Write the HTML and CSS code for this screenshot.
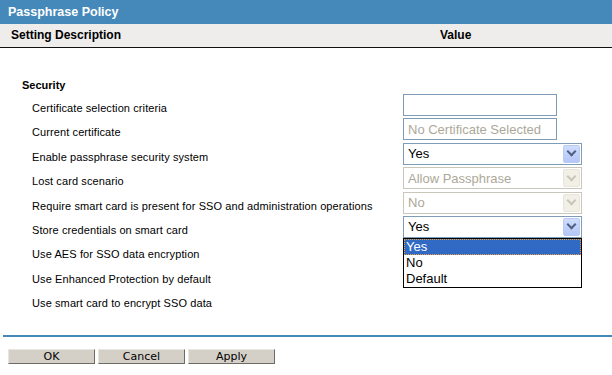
FILE: index.html
```html
<!DOCTYPE html>
<html lang="en">
<head>
    <meta charset="UTF-8">
    <meta name="viewport" content="width=device-width, initial-scale=1.0">
    <title>Passphrase Policy</title>
    <link rel="stylesheet" href="styles.css">
</head>
<body>
    <div class="title">Passphrase Policy</div>
    <div class="head">
        <span>Setting Description</span>
        <span>Value</span>
    </div>

    <div class="section">Security</div>
    <div class="rows">
        <div class="row">
            <span class="label">Certificate selection criteria</span>
            <div class="field text"></div>
        </div>
        <div class="row">
            <span class="label">Current certificate</span>
            <div class="field text"><span class="muted">No Certificate Selected</span></div>
        </div>
        <div class="row">
            <span class="label">Enable passphrase security system</span>
            <div class="field select"><span>Yes</span><i class="arrow"></i></div>
        </div>
        <div class="row">
            <span class="label">Lost card scenario</span>
            <div class="field select disabled"><span>Allow Passphrase</span><i class="arrow"></i></div>
        </div>
        <div class="row">
            <span class="label">Require smart card is present for SSO and administration operations</span>
            <div class="field select disabled"><span>No</span><i class="arrow"></i></div>
        </div>
        <div class="row">
            <span class="label">Store credentials on smart card</span>
            <div class="field select open">
                <span>Yes</span><i class="arrow"></i>
                <ul class="list">
                    <li class="active">Yes</li>
                    <li>No</li>
                    <li>Default</li>
                </ul>
            </div>
        </div>
        <div class="row">
            <span class="label">Use AES for SSO data encryption</span>
        </div>
        <div class="row">
            <span class="label">Use Enhanced Protection by default</span>
        </div>
        <div class="row">
            <span class="label">Use smart card to encrypt SSO data</span>
        </div>
    </div>

    <div class="rule"></div>
    <div class="buttons">
        <button>OK</button>
        <button>Cancel</button>
        <button>Apply</button>
    </div>
</body>
</html>
```

FILE: styles.css
```css
body {
    margin: 0;
    font-family: 'Liberation Sans', Arial, sans-serif;
    background: #fff;
    color: #000;
}

.title {
    height: 24px;
    line-height: 24px;
    padding-left: 8px;
    background: #4589ba;
    color: #fff;
    font-size: 12.5px;
    font-weight: bold;
}

.head {
    display: grid;
    grid-template-columns: 429px 1fr;
    height: 23px;
    line-height: 23px;
    padding-left: 11px;
    background: #eeedeb;
    border-bottom: 1px solid #111;
    font-size: 12px;
    font-weight: bold;
}

.section {
    margin-top: 30px;
    padding-left: 22px;
    line-height: 14px;
    font-size: 11px;
    font-weight: bold;
}

.rows {
    display: grid;
    grid-auto-rows: 24.4px;
    margin-top: 1px;
}

.row {
    display: grid;
    grid-template-columns: 403px 1fr;
}

.label {
    padding: 8px 0 0 32px;
    line-height: 14px;
    font-size: 11px;
    letter-spacing: 0.1px;
}

.field {
    position: relative;
    box-sizing: border-box;
    display: flex;
    align-items: center;
    height: 22px;
    margin-top: 1px;
    padding-left: 4px;
    border: 1px solid #7f9db9;
    font-size: 13px;
    background: #fff;
}

.text {
    width: 154px;
}

.muted {
    color: #aca899;
}

.select {
    width: 179px;
    justify-content: space-between;
    padding-right: 1px;
}

.arrow {
    box-sizing: border-box;
    width: 17px;
    height: 18px;
    border: 1px solid #b9cbf3;
    border-radius: 2px;
    background: linear-gradient(#cfdcfd, #b4c7f7);
    display: flex;
    align-items: center;
    justify-content: center;
}

.arrow::after {
    content: "";
    width: 5px;
    height: 5px;
    margin-top: -4px;
    border-right: 2px solid #4d6185;
    border-bottom: 2px solid #4d6185;
    transform: rotate(45deg);
}

.disabled {
    border-color: #c9c7ba;
    color: #aca899;
}

.disabled .arrow {
    border-color: #e8e6dc;
    background: #f1efe6;
}

.disabled .arrow::after {
    border-color: #c9c7ba;
}

.list {
    position: absolute;
    top: 21px;
    left: -1px;
    width: 179px;
    box-sizing: border-box;
    margin: 0;
    padding: 0;
    list-style: none;
    border: 1px solid #000;
    background: #fff;
    font-size: 13px;
    z-index: 2;
}

.list li {
    height: 16px;
    line-height: 16px;
    padding-left: 2px;
}

.list .active {
    background: #316ac5;
    color: #fff;
    outline: 1px dotted #e8a040;
    outline-offset: -1px;
}

.rule {
    height: 2px;
    margin: 22px 0 0 3px;
    background: #4589ba;
}

.buttons {
    display: flex;
    gap: 3px;
    margin: 12px 0 0 8px;
}

button {
    box-sizing: border-box;
    width: 87px;
    height: 15px;
    padding: 0;
    border: 1px solid;
    border-color: #e8e6e0 #6d6b66 #6d6b66 #e8e6e0;
    background: #d4d0c8;
    font-family: 'DejaVu Sans', sans-serif;
    font-size: 11px;
    line-height: 13px;
    color: #000;
}
```
